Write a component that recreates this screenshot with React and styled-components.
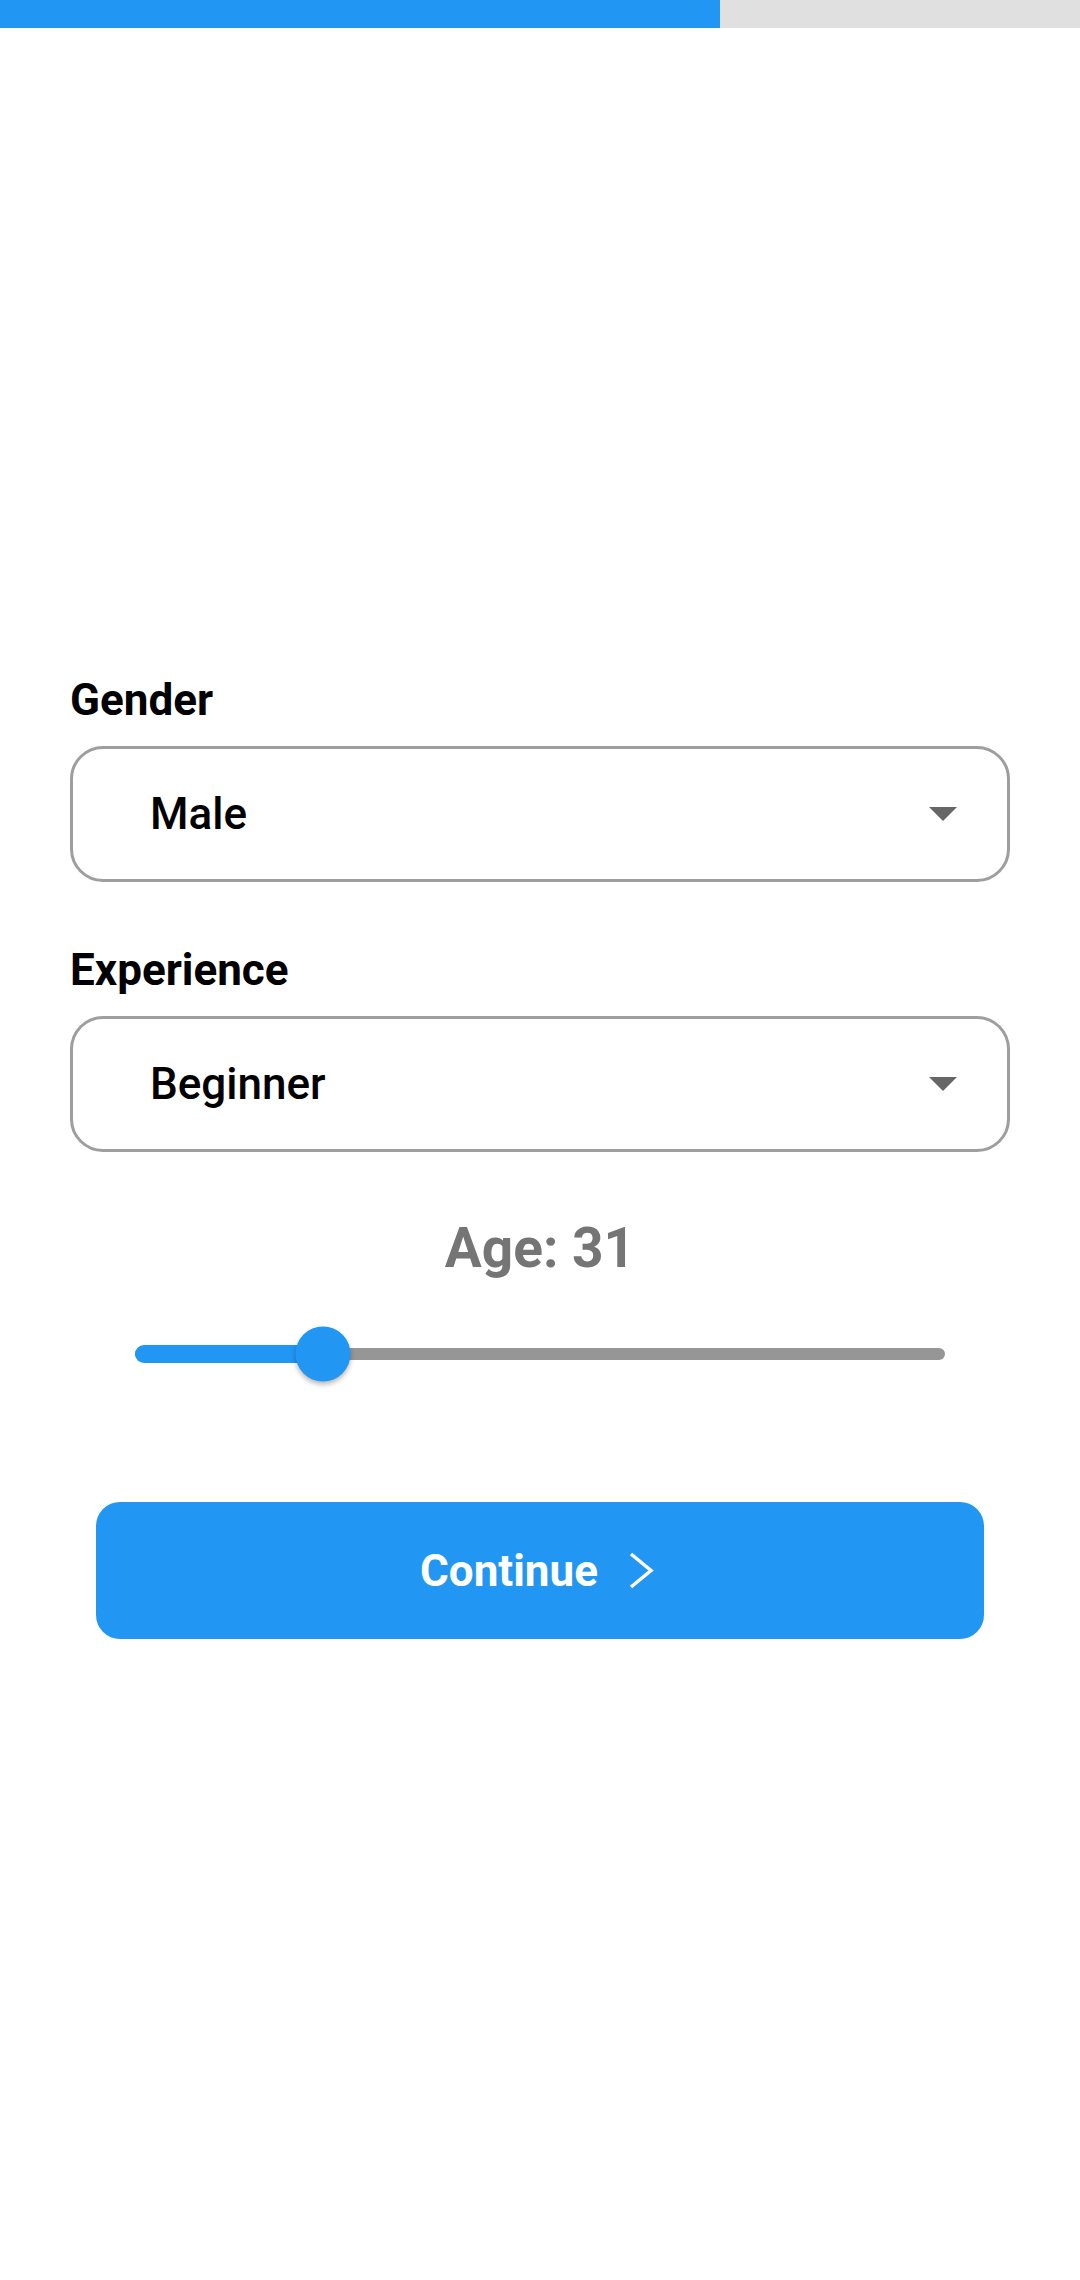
import React, { useState } from "react";
import styled, { createGlobalStyle } from "styled-components";

const GlobalStyle = createGlobalStyle`
  body {
    margin: 0;
    background: #fff;
    font-family: Roboto, "Noto Sans", sans-serif;
  }
`;

const MIN_AGE = 18;
const MAX_AGE = 74;

export default function App() {
  const [gender] = useState("Male");
  const [experience] = useState("Beginner");
  const [age] = useState(31);
  const step = 2;
  const totalSteps = 3;

  const percent = ((age - MIN_AGE) / (MAX_AGE - MIN_AGE)) * 100;

  return (
    <Page>
      <GlobalStyle />
      <Progress>
        <ProgressFill style={{ width: `${(step / totalSteps) * 100}%` }} />
      </Progress>

      <Form>
        <Label>Gender</Label>
        <Select>
          <SelectValue>{gender}</SelectValue>
          <Caret />
        </Select>

        <Label $top={62}>Experience</Label>
        <Select>
          <SelectValue>{experience}</SelectValue>
          <Caret />
        </Select>

        <AgeTitle>Age: {age}</AgeTitle>

        <SliderWrap>
          <Track>
            <ActiveTrack style={{ width: `${percent}%` }} />
            <Thumb style={{ left: `${percent}%` }} />
          </Track>
        </SliderWrap>

        <ContinueButton>
          Continue
          <Chevron viewBox="0 0 44 44" width="44" height="44">
            <polyline
              points="15,5 35,21.5 15,38"
              fill="none"
              stroke="#fff"
              strokeWidth="3.5"
            />
          </Chevron>
        </ContinueButton>
      </Form>
    </Page>
  );
}

const Page = styled.div`
  min-height: 2280px;
  background: #fff;
`;

const Progress = styled.div`
  height: 28px;
  width: 100%;
  background-color: #e0e0e0;
`;

const ProgressFill = styled.div`
  height: 100%;
  background-color: #2196f3;
`;

const Form = styled.div`
  display: flex;
  flex-direction: column;
  padding: 646px 70px 0 70px;
`;

const Label = styled.div`
  margin-top: ${(p) => p.$top || 0}px;
  margin-bottom: 20px;
  font-size: 44px;
  line-height: 52px;
  font-weight: 700;
  color: #000;
`;

const Select = styled.div`
  box-sizing: border-box;
  height: 136px;
  display: flex;
  align-items: center;
  justify-content: space-between;
  padding: 0 50px 0 77px;
  border: 3px solid #9e9e9e;
  border-radius: 33px;
`;

const SelectValue = styled.span`
  font-size: 44px;
  line-height: 52px;
  font-weight: 500;
  color: #000;
`;

const Caret = styled.span`
  width: 0;
  height: 0;
  border-left: 14px solid transparent;
  border-right: 14px solid transparent;
  border-top: 14px solid #666;
`;

const AgeTitle = styled.div`
  margin-top: 64px;
  text-align: center;
  font-size: 55px;
  line-height: 64px;
  font-weight: 700;
  color: #757575;
`;

const SliderWrap = styled.div`
  height: 56px;
  margin: 46px 65px 0 65px;
  display: flex;
  align-items: center;
`;

const Track = styled.div`
  position: relative;
  flex: 1;
  height: 12px;
  border-radius: 6px;
  background-color: #969696;
`;

const ActiveTrack = styled.div`
  position: absolute;
  left: 0;
  top: -3px;
  height: 18px;
  border-radius: 9px;
  background-color: #2196f3;
`;

const Thumb = styled.div`
  position: absolute;
  top: 50%;
  width: 55px;
  height: 55px;
  border-radius: 50%;
  background-color: #2196f3;
  transform: translate(-50%, -50%);
  box-shadow: 0 3px 5px rgba(0, 0, 0, 0.28);
`;

const ContinueButton = styled.button`
  margin: 120px 26px 0 26px;
  height: 137px;
  display: flex;
  align-items: center;
  justify-content: center;
  gap: 18px;
  border: none;
  border-radius: 24px;
  background-color: #2196f3;
  color: #fff;
  font-family: Roboto, "Noto Sans", sans-serif;
  font-size: 44px;
  font-weight: 700;
  cursor: pointer;
`;

const Chevron = styled.svg`
  display: block;
`;
